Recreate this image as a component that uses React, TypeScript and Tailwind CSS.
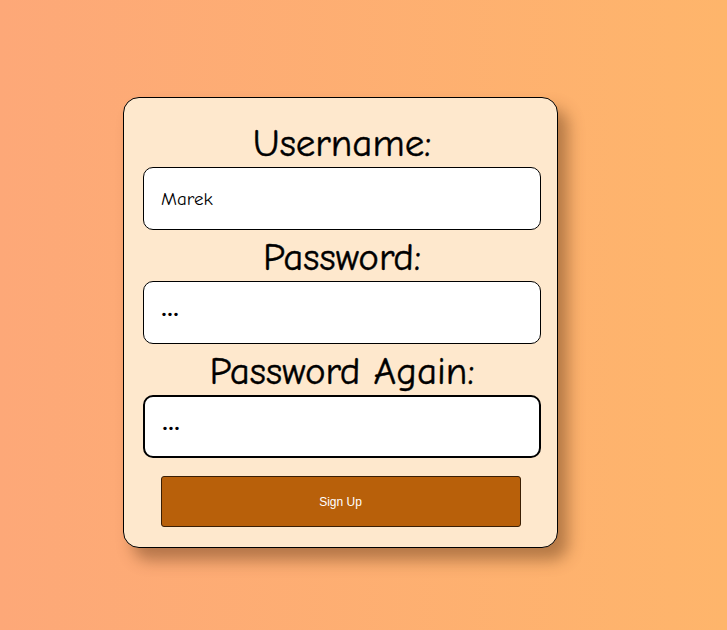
import React from "react"

const font = { fontFamily: '"Comic Sans MS", "Comic Neue", "Lato", "DejaVu Sans", sans-serif' }

type FieldProps = {
  label: string,
  type: string,
  value: string,
  focused?: boolean,
}

const Field = ({ label, type, value, focused }: FieldProps) => {
  const border = focused ? 'border-2' : 'border'
  return (
    <div className="flex flex-col">
      <label className="h-[51px] flex items-center justify-center text-[39px] leading-none text-black pt-[3px] [-webkit-text-stroke:0.4px_black]">
        {label}
      </label>
      <input
        type={type}
        defaultValue={value}
        readOnly
        className={`h-[63px] w-full rounded-[10px] ${border} border-black bg-white px-[17px] text-[19px] text-black outline-none`}
      />
    </div>
  )
}

export default function App() {
  return (
    <div className="min-h-screen w-full bg-linear-to-r from-[#fda878] to-[#feb56b] pt-[97px] pl-[123px]" style={font}>
      <div className="w-[435px] h-[451px] rounded-[16px] border border-black bg-[#fee8cd] pl-[19px] pr-[16px] pt-[18px] shadow-[10px_12px_16px_rgba(90,50,20,0.45)]">
        <Field label="Username:" type="text" value="Marek" />
        <Field label="Password:" type="password" value="abc" />
        <Field label="Password Again:" type="password" value="abc" focused />
        <div className="flex justify-center pt-[18px] pr-[3px]">
          <button
            className="w-[360px] h-[51px] rounded-[3px] border border-[#3a1f05] bg-[#b8600a] text-white text-[12px]"
            style={{ fontFamily: '"Liberation Sans", Arial, sans-serif' }}
          >
            Sign Up
          </button>
        </div>
      </div>
    </div>
  )
}
